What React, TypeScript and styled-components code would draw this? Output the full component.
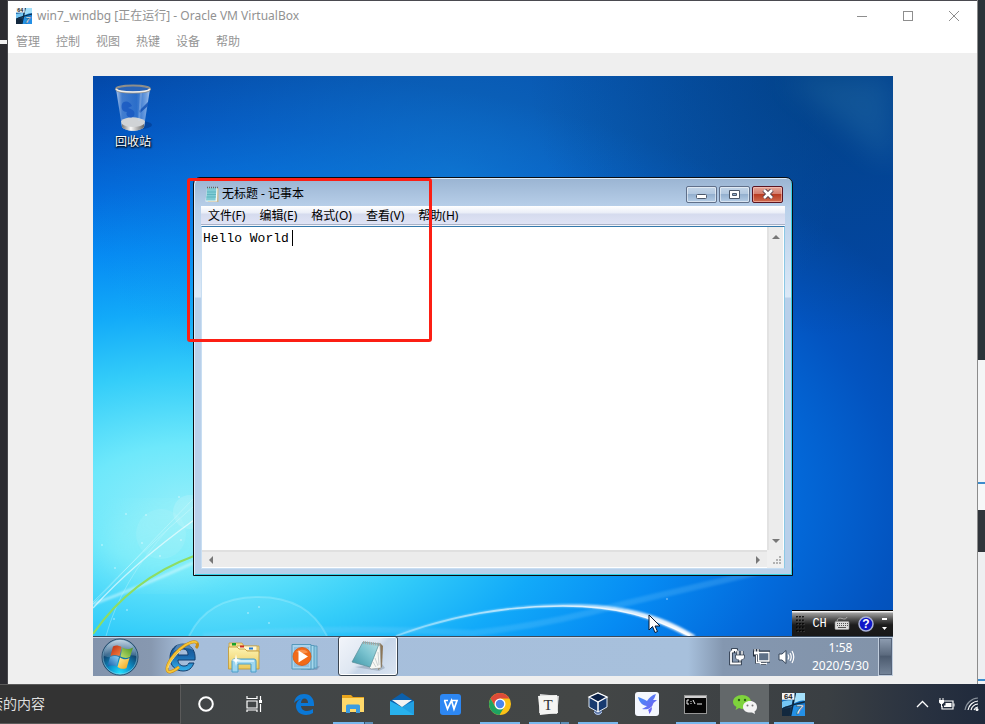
import React from "react";
import styled, { createGlobalStyle, css } from "styled-components";

const GlobalStyle = createGlobalStyle`
  *, *::before, *::after { box-sizing: border-box; }
  html, body, #root { margin: 0; height: 100%; }
  body { overflow: hidden; font: 12px/16px "Noto Sans", "Noto Sans CJK SC", sans-serif; }
  button, input, textarea { font: inherit; color: inherit; border: 0; padding: 0; margin: 0; background: none; outline: 0; }
  svg { display: block; flex: none; }
`;

/* ---------- host desktop ---------- */

const Host = styled.div`
  height: 100vh;
  display: grid;
  grid-template-columns: 8px 1fr 8px;
  grid-template-rows: 1fr 40px;
`;

const LeftEdge = styled.div`
  border-right: 1px solid #47474b;
  background: linear-gradient(#2c2c31 40px, #f0f0f0 40px 44px, #2b2b30 44px);
`;

const RightEdge = styled.div`
  border-left: 1px solid #8c8c8c;
  background: linear-gradient(
    #2b3238 360px, #f4f5f6 360px 482px, #3d8ccc 482px 484px, #f6f7f8 484px 510px,
    #30353b 510px 552px, #eeeff1 552px 679px, #3d8ccc 679px 681px, #f2f3f5 681px
  );
`;

const VmWindow = styled.main`
  display: flex;
  flex-direction: column;
  min-width: 0;
  border-top: 1px solid #4a4a50;
  background: #efefef;
`;

const VmTitleBar = styled.header`
  display: flex;
  align-items: center;
  height: 30px;
  padding-left: 8px;
  gap: 5px;
  background: #fff;
  color: #929292;
`;

const VmTitle = styled.h1`
  flex: 1;
  margin: 0;
  font-size: 12px;
  line-height: 16px;
  font-weight: 400;
`;

const ControlGroup = styled.div`
  display: flex;
`;

const VmControl = styled.button`
  display: grid;
  place-items: center;
  width: 46px;
  height: 30px;
`;

const VmMenu = styled.nav`
  display: flex;
  height: 22px;
  padding-left: 8px;
  gap: 16px;
  background: #fff;
  color: #959595;
`;

const MenuButton = styled.button`
  line-height: 20px;
  white-space: nowrap;
`;

const VmViewport = styled.div`
  flex: 1;
  display: flex;
  min-height: 0;
  padding: 23px 84px 8px 85px;
`;

/* ---------- guest desktop ---------- */

const Guest = styled.section`
  flex: 1;
  display: flex;
  flex-direction: column;
  min-width: 0;
`;

const GuestDesktop = styled.div`
  flex: 1;
  position: relative;
  min-height: 0;
  background:
    radial-gradient(ellipse 300px 260px at 92% 0, rgba(2, 62, 112, 0.55), transparent),
    radial-gradient(ellipse 380px 260px at 45% 18%, rgba(24, 140, 216, 0.5), transparent),
    radial-gradient(ellipse 820px 440px at 100px 430px,
      #92eefa 0%, #6ee8fb 14%, #34cdf9 30%, #12aaf9 44%, #068bf3 58%, #036bdc 72%, #0354c0 86%, #0347a6 100%);
`;

const Wallpaper = styled.svg`
  position: absolute;
  inset: 0;
  width: 100%;
  height: 100%;
`;

const DesktopIcon = styled.button`
  position: absolute;
  left: 10px;
  top: 8px;
  width: 60px;
  display: flex;
  flex-direction: column;
  align-items: center;
  gap: 2px;
  color: #fff;
  text-shadow: 1px 1px 2px #000, 0 1px 2px #000;
`;

const Notepad = styled.section`
  position: absolute;
  inset: 101px 100px 60px;
  display: flex;
  flex-direction: column;
  padding: 0 7px 6px;
  border: 1px solid #0a0d12;
  border-radius: 7px 7px 0 0;
  background: linear-gradient(#9ab4d2, #b9d0ea 30px, #dce9f7 119px, #b9d0ea 120px);
  box-shadow: inset 1px 1px #dcebf9, inset -1px -1px #35cfe4;
`;

const NotepadTitleBar = styled.header`
  display: flex;
  align-items: center;
  height: 28px;
  gap: 2px;
  padding: 4px 2px 0 3px;
  color: #000;
`;

const NotepadTitle = styled.h2`
  flex: 1;
  margin: 0;
  font-size: 12px;
  line-height: 16px;
  font-weight: 400;
`;

const CaptionButton = styled.button<{ $close?: boolean }>`
  display: grid;
  place-items: center;
  width: 31px;
  height: 17px;
  border: 1px solid ${(p) => (p.$close ? "#5a1422" : "#60708a")};
  border-radius: 2px;
  background: ${(p) =>
    p.$close
      ? "linear-gradient(#e4a69a, #d27a6a 48%, #b93c22 50%, #cf6b50)"
      : "linear-gradient(#c3d5e8, #b1c7df 48%, #94b0cf 50%, #b5cde6)"};
  box-shadow: inset 0 0 0 1px ${(p) => (p.$close ? "rgba(255,205,195,.55)" : "rgba(255,255,255,.5)")};
`;

const NotepadMenu = styled.nav`
  display: flex;
  height: 20px;
  gap: 14px;
  padding-left: 7px;
  color: #000;
  border-bottom: 1px solid #f4f6fb;
  background: linear-gradient(#fff, #e9edf7 7px, #d5dbee 8px, #dfe3f5 18px, #a9b2c8 18px);
`;

const Client = styled.div`
  flex: 1;
  min-height: 0;
  display: grid;
  grid-template-columns: 1fr 17px;
  grid-template-rows: 1fr 18px;
  border: 1px solid #c8def2;
  border-top: 1px solid #3478ac;
  border-right-color: #8cc8e4;
  background: #fff;
`;

const Editor = styled.div`
  position: relative;
`;

const TextArea = styled.textarea`
  display: block;
  width: 100%;
  height: 100%;
  padding: 3px 1px;
  resize: none;
  overflow: hidden;
  color: #000;
  font: 13px/18px "Liberation Mono", monospace;
`;

const Caret = styled.span`
  position: absolute;
  left: 90px;
  top: 3px;
  width: 1px;
  height: 16px;
  background: #000;
`;

const ScrollBar = styled.div<{ $vertical?: boolean }>`
  display: flex;
  justify-content: space-between;
  align-items: center;
  background: #ececec;
  ${(p) =>
    p.$vertical
      ? css`
          flex-direction: column;
          padding: 6px 0 5px;
          border-left: 2px solid #e2e2e2;
          border-right: 1px solid #fff;
        `
      : css`
          padding: 0 5px;
          border-top: 2px solid #e0e0e0;
          border-bottom: 1px solid #fff;
        `}
`;

const ScrollArrow = styled.button`
  display: grid;
  place-items: center;
  width: 8px;
  height: 8px;
`;

const ResizeGrip = styled.div`
  display: grid;
  place-items: end;
  padding: 2px;
  background: #f0f0f0;
`;

const RedFrame = styled.div`
  position: absolute;
  left: 94px;
  top: 102px;
  width: 245px;
  height: 164px;
  border: 3px solid #fc1f14;
  border-radius: 3px;
  pointer-events: none;
`;

const Pointer = styled.svg`
  position: absolute;
  left: 555px;
  top: 538px;
`;

const LanguageBar = styled.div`
  position: absolute;
  right: 0;
  bottom: 0;
  width: 101px;
  height: 26px;
  display: flex;
  align-items: center;
  justify-content: space-between;
  padding: 0 5px 0 4px;
  border-top: 1px solid #000;
  background: linear-gradient(#f2f2f2 1px, #a0a0a0 2px, #555 8px, #1c1c1c 14px, #181818);
  color: #fff;
  font: 12px/16px "Liberation Mono", monospace;
`;

const BarButton = styled.button`
  display: grid;
  place-items: center;
`;

const GuestTaskbar = styled.footer`
  display: flex;
  height: 40px;
  border-top: 1px solid #3b4a5c;
  box-shadow: inset 0 1px #c9d8ea;
  background: linear-gradient(90deg, #8293ac, #8798b0 58px, #a6bedb 92px, #a7c0dc calc(100% - 205px), #8497b0 calc(100% - 170px), #8293a9);
`;

const StartButton = styled.button`
  display: grid;
  place-items: center;
  width: 54px;
  margin-right: 4px;
`;

const GuestTask = styled.button<{ $active?: boolean }>`
  display: grid;
  place-items: center;
  width: 62px;
  ${(p) =>
    p.$active &&
    css`
      width: 60px;
      margin: -1px 1px 0;
      border: 1px solid #3a4552;
      border-radius: 3px;
      box-shadow: inset 0 0 0 1px #fff;
      background: linear-gradient(135deg, #f2f5fa, #dfe7f2 45%, #c6d5e8 55%, #dbe5f2);
    `}
`;

const GuestTray = styled.div`
  display: flex;
  align-items: center;
  margin-left: auto;
  color: #fff;
`;

const TrayIcons = styled.div`
  display: flex;
  align-items: center;
  gap: 8px;
  padding-right: 8px;
`;

const Clock = styled.time`
  width: 75px;
  text-align: center;
  line-height: 18px;
`;

const ShowDesktop = styled.button`
  align-self: stretch;
  width: 15px;
  border: 1px solid #c0cddd;
  outline: 1px solid #566479;
  outline-offset: -2px;
  background: linear-gradient(#8f9eb2, #5c6b7f 45%, #4c5b6f 50%, #75859a);
`;

/* ---------- host taskbar ---------- */

const HostTaskbar = styled.footer`
  grid-column: 1 / -1;
  display: flex;
  overflow: hidden;
  background: linear-gradient(90deg, #404446, #434646 60%, #3a3f43 84%, #283140 94%, #202a3c);
  color: #fff;
`;

const SearchBox = styled.input`
  width: 181px;
  border: 1px solid #5a5a5a;
  border-left: 0;
  background: #333;
  font-size: 14px;
  text-indent: -11px;
  &::placeholder { color: #dedede; opacity: 1; }
`;

const HostTask = styled.button<{ $open?: boolean; $group?: boolean; $active?: boolean }>`
  display: grid;
  place-items: center;
  width: 49px;
  background:
    ${(p) =>
      p.$group
        ? "linear-gradient(90deg, #78b8ee 31px, #30536f 31px 32px, #5c8fb8 32px) center bottom / 40px 2px no-repeat"
        : p.$open
          ? `linear-gradient(#78b8ee, #78b8ee) center bottom / ${p.$active ? "49px" : "40px"} 2px no-repeat`
          : "none"}
    ${(p) => (p.$active ? ", #63686a" : "")};
`;

const HostTray = styled.div`
  display: flex;
  align-items: center;
  gap: 9px;
  margin-left: auto;
  padding-right: 6px;
`;

/* ---------- drawings ---------- */

const VmIcon = ({ size }: { size: number }) => (
  <svg width={size} height={size} viewBox="0 0 24 24">
    <rect width="24" height="24" rx="1" fill="#1272c4" />
    <path d="M0 9C5 7 8 8 12 6L9 24H0Z" fill="#1c3e60" />
    <path d="M0 9C5 7 8 8 11 7L10 14C7 13 3 14 0 16Z" fill="#74c6f4" />
    <path d="M0 18C3 16 7 15 9 16L8 24H0Z" fill="#12283e" />
    <path d="M14 0H24V8C20 7 16 9 12 11Z" fill="#a4e0fb" />
    <path d="M12 13C16 11 20 11 24 12V24H9Z" fill="#2490e6" />
    <path d="M14 0L9 24M0 17C8 12 15 12 24 9" stroke="#0c2840" strokeWidth="1.5" fill="none" />
    <rect x="0" y="0" width="13" height="7" fill="#f4f4f4" />
    <text x="2" y="6.5" fontSize="8" fontWeight="700" fontFamily="Liberation Sans" fill="#222">64</text>
    <text x="14" y="22" fontSize="14" fontWeight="700" fontStyle="italic" fontFamily="Liberation Sans" fill="#fff" stroke="#20405c" strokeWidth=".5">7</text>
  </svg>
);

const RecycleBin = () => (
  <svg width="42" height="48" viewBox="0 0 42 48">
    <defs>
      <linearGradient id="bin" x1="0" x2="1">
        <stop offset="0" stopColor="#d6e6fb" stopOpacity=".8" />
        <stop offset=".18" stopColor="#6d9ade" stopOpacity=".6" />
        <stop offset=".6" stopColor="#4a84d8" stopOpacity=".55" />
        <stop offset=".9" stopColor="#9dc0ef" stopOpacity=".75" />
        <stop offset="1" stopColor="#d8e6fb" stopOpacity=".8" />
      </linearGradient>
      <linearGradient id="base" x1="0" x2="1">
        <stop offset="0" stopColor="#777" />
        <stop offset=".4" stopColor="#fafafa" />
        <stop offset="1" stopColor="#666" />
      </linearGradient>
    </defs>
    <ellipse cx="28" cy="41" rx="12" ry="4" fill="#002a70" opacity=".4" />
    <path d="M4 5L10 43C14 47 28 47 32 43L38 5Z" fill="url(#bin)" />
    <path d="M9 37C14 32 27 32 33 37L32 43C28 48 14 48 10 43Z" fill="#d0d3d6" />
    <path d="M10 40C14 44 28 44 32 40L32 43C28 48 14 48 10 43Z" fill="url(#base)" />
    <path d="M10 20C12 16 18 17 20 22L16 24C20 25 24 27 22 32C17 36 13 31 15 28C10 28 9 24 10 20Z" fill="#1858c0" opacity=".8" />
    <path d="M27 27L36 18V22L28 29Z" fill="#1452b4" opacity=".85" />
    <path d="M29 9L27 37" stroke="#cfe0f8" strokeWidth="2" opacity=".25" />
    <ellipse cx="21" cy="5" rx="17" ry="3.5" fill="#2a64b8" stroke="#8e8e8a" strokeWidth="2" />
    <path d="M4 5C7 9 35 9 38 5" stroke="#eee" strokeWidth="1.5" fill="none" />
  </svg>
);

const NotepadSmall = () => (
  <svg width="16" height="17" viewBox="0 0 16 17">
    <path d="M4 2H14.5V16H4Z" fill="#c9b98e" />
    <path d="M3 2H13.5L13 15.5H1.500Z" fill="#f4f8f6" />
    <path d="M3 2H12.5L11.5 14.5H2Z" fill="#7fcbd4" />
    <path d="M3 6H12M3 8.5H12M2.5 11H12" stroke="#55aeba" strokeWidth=".8" />
    <path d="M3 1.5H14" stroke="#666" strokeWidth="1.5" strokeDasharray="1 1" />
  </svg>
);

const NotepadLarge = () => (
  <svg width="34" height="32" viewBox="0 0 34 32">
    <defs>
      <linearGradient id="pad" x1="0" y1="1" x2="1" y2="0">
        <stop offset="0" stopColor="#3e94a6" />
        <stop offset=".55" stopColor="#7cc4d0" />
        <stop offset="1" stopColor="#b8dfe4" />
      </linearGradient>
    </defs>
    <path d="M4 27L28 31L34 28L31 24Z" fill="#8696a8" opacity=".5" />
    <path d="M29 3L32 6L31 27L27 30Z" fill="#8c7658" />
    <path d="M27 3L29 4L30 28L20 29L17 26Z" fill="#f8f8f4" stroke="#91989c" strokeWidth=".6" />
    <path d="M12 2L28 4L19 27L1 22Z" fill="url(#pad)" stroke="#568c96" strokeWidth=".7" />
    <path d="M12 2.5L29 4.5" stroke="#a4a4a0" strokeWidth="3" strokeDasharray="1 1" />
    <path d="M22 22L25 27M24 18L27 26M27 12L28 25" stroke="#b8bec2" strokeWidth=".7" />
  </svg>
);

const StartOrb = () => (
  <svg width="38" height="38" viewBox="0 0 38 38">
    <defs>
      <radialGradient id="orb" cx=".5" cy=".95" r=".9">
        <stop offset="0" stopColor="#22e0ff" />
        <stop offset=".35" stopColor="#0b93cc" />
        <stop offset=".7" stopColor="#12456f" />
        <stop offset="1" stopColor="#6385a4" />
      </radialGradient>
      <linearGradient id="orbShine" x1="0" y1="0" x2="0" y2="1">
        <stop offset="0" stopColor="#dceaf5" stopOpacity=".75" />
        <stop offset="1" stopColor="#9cbcd5" stopOpacity=".25" />
      </linearGradient>
      <linearGradient id="flagR" x1="0" x2="1" y2="1"><stop stopColor="#b92c14" /><stop offset="1" stopColor="#f98440" /></linearGradient>
      <linearGradient id="flagG" x1="1" x2="0" y2="1"><stop stopColor="#4a9420" /><stop offset="1" stopColor="#c0e070" /></linearGradient>
      <linearGradient id="flagB" x1="0" x2="1" y1="1" y2="0"><stop stopColor="#145ca8" /><stop offset="1" stopColor="#8cd2f8" /></linearGradient>
      <linearGradient id="flagY" x1="1" x2="0" y1="1" y2="0"><stop stopColor="#f0a010" /><stop offset="1" stopColor="#fff0a0" /></linearGradient>
    </defs>
    <circle cx="19" cy="19" r="18" fill="url(#orb)" stroke="#264c6c" strokeWidth="1" />
    <circle cx="19" cy="19" r="17" fill="none" stroke="#a6d4e8" strokeWidth=".8" opacity=".7" />
    <path d="M3 18A16 16 0 0 1 35 18C27 15 12 22 3 18Z" fill="url(#orbShine)" />
    <path d="M12 8.500C15 7 17.500 7.500 20.500 9L18.500 18C15 16.500 12.500 16.500 9.500 18Z" fill="url(#flagR)" />
    <path d="M21.500 9.500C25 11.500 28 11.500 32 9.500L29 19C25.500 20.500 22.500 20 19.500 18.500Z" fill="url(#flagG)" />
    <path d="M9 19C12 17.500 14.500 17.500 18 19L15.500 28.500C12.500 27 10 27 6.500 28.500Z" fill="url(#flagB)" />
    <path d="M19 19.500C22 21.500 25 22 28.500 20L25.500 30C23 31.500 19.500 31 16.500 29Z" fill="url(#flagY)" />
  </svg>
);

const InternetExplorer = () => (
  <svg width="34" height="34" viewBox="0 0 34 34">
    <defs>
      <linearGradient id="ie" x1="0" y1="0" x2="0" y2="1">
        <stop offset="0" stopColor="#16508c" />
        <stop offset=".45" stopColor="#1b68ac" />
        <stop offset="1" stopColor="#35b4ee" />
      </linearGradient>
    </defs>
    <path d="M18 4C26 4 31 11 30 20H13C13 24 16 26 19 26C22 26 23 25 24 23H29C27 28 24 31 18 31C10 31 5 25 5 18C5 10 10 4 18 4ZM13 15H23C23 11 21 9 18 9C15 9 13 11 13 15Z" fill="url(#ie)" stroke="#123d6c" strokeWidth="1" fillRule="evenodd" />
    <path d="M12 5C17 2 26 4 28 10C23 7 14 7 8 12Z" fill="#bcdcf5" opacity=".35" />
    <path d="M14 27C8 32 2 34 2 29C2 24 8 15 15 9C22 3 30 0 32 3C33 5 32 7 31 8" fill="none" stroke="#c98c14" strokeWidth="3" />
    <path d="M14 27C8 32 2 34 2 29C2 24 8 15 15 9C22 3 30 0 32 3" fill="none" stroke="#f6c435" strokeWidth="2" />
    <path d="M3 28C4 23 10 16 15 11" fill="none" stroke="#ffe891" strokeWidth=".9" />
  </svg>
);

const WinExplorer = () => (
  <svg width="34" height="32" viewBox="0 0 34 32">
    <defs>
      <linearGradient id="fold" x1="0" y1="0" x2="0" y2="1">
        <stop offset="0" stopColor="#fdf4b4" />
        <stop offset="1" stopColor="#ecc95a" />
      </linearGradient>
    </defs>
    <path d="M2 2H15L17 5H32V12H2Z" fill="#f3dc8c" stroke="#c5a144" strokeWidth=".8" />
    <rect x="5" y="2" width="4" height="2.5" fill="#18a228" />
    <path d="M10 5H30V10H10Z" fill="#fff8d6" stroke="#c5a144" strokeWidth=".7" />
    <rect x="13" y="4.5" width="4" height="2" fill="#cf2e20" />
    <rect x="22" y="6.5" width="4" height="2" fill="#2079d4" />
    <path d="M1.5 6H10L12 8H18L20 10H32V28H1.500Z" fill="url(#fold)" stroke="#c39c3c" strokeWidth=".9" />
    <path d="M5 31V20Q5 18 7 18H27Q29 18 29 20V31H24V23H11V31Z" fill="#9ed7ef" stroke="#4a9fca" strokeWidth="1" />
    <path d="M7 20H27" stroke="#dff5fd" strokeWidth="1.5" />
    <path d="M9 13L10 18L14 19L10 20L9 25L8 20L4 19L8 18Z" fill="#fff" />
  </svg>
);

const MediaPlayer = () => (
  <svg width="30" height="28" viewBox="0 0 30 28">
    <path d="M19 24L29 23L26 27H16Z" fill="#6f87a5" opacity=".5" />
    <path d="M13 3H26V25H13Z" fill="#8ec6e0" stroke="#4d93b6" strokeWidth=".8" />
    <path d="M10 2.5H23V26H10Z" fill="#a5d8ec" stroke="#4d93b6" strokeWidth=".8" />
    <path d="M1 1.5H20V26H1Z" fill="#a9d3ec" stroke="#4d93b6" strokeWidth=".9" />
    <path d="M3 4H18V24H3Z" fill="#8fbfe0" />
    <circle cx="11" cy="13.5" r="9" fill="#f26a18" stroke="#d9560e" strokeWidth=".8" />
    <path d="M5 9A9 9 0 0 1 17 9C13 12 8 9 5 9Z" fill="#ffad70" opacity=".6" />
    <path d="M7.5 7.5L17 13.5L7.5 19.500Z" fill="#fff" />
  </svg>
);

const PowerPlug = () => (
  <svg width="16" height="18" viewBox="0 0 16 18">
    <path d="M2 3.5H4V2H7V3.5H9M2 3.5V15.5H11V13" stroke="#253040" strokeWidth="3.5" fill="none" />
    <path d="M2 3.5H4V2H7V3.5H9M2 3.5V15.5H11V13" stroke="#fff" strokeWidth="1.8" fill="none" />
    <path d="M9 3V7M13 3V7" stroke="#253040" strokeWidth="3" />
    <path d="M9 3V7M13 3V7" stroke="#fff" strokeWidth="1.5" />
    <path d="M6.5 7H15.5V9C15.5 11 13.5 12 12 12V14H10V12C8 12 6.5 11 6.5 9Z" fill="#fff" stroke="#253040" strokeWidth=".7" />
  </svg>
);

const NetworkIcon = () => (
  <svg width="17" height="17" viewBox="0 0 17 17">
    <path d="M5 4H16V13H5ZM8 15.5H13M2 1V4M5 1V4M1 4H6V7H1ZM3.5 7V14H6" fill="none" stroke="#253040" strokeWidth="3" />
    <path d="M5.5 4.5H16V13H5.500Z" fill="#5f7187" stroke="#fff" strokeWidth="1.3" />
    <path d="M7 15.5H14M2 1V4M5 1V4M3.5 7V14.5H8" fill="none" stroke="#fff" strokeWidth="1.3" />
    <path d="M1 3.5H6V6.5H1Z" fill="#fff" />
  </svg>
);

const SpeakerIcon = () => (
  <svg width="17" height="16" viewBox="0 0 17 16">
    <path d="M1 5H4L8 1.5V14.5L4 11H1Z" fill="#fff" stroke="#36465a" strokeWidth="1" />
    <path d="M10 5.5Q11.5 8 10 10.5M12 4Q14.5 8 12 12M14 2Q17.5 8 14 14" fill="none" stroke="#fff" strokeWidth="1.2" />
  </svg>
);

const Keyboard = () => (
  <svg width="16" height="15" viewBox="0 0 16 15">
    <path d="M3 5Q4 1 8 2.5Q12 4 13 1" fill="none" stroke="#a8a8a8" strokeWidth="1" />
    <rect x="1" y="5.5" width="14" height="8" rx="1" fill="#ddd" stroke="#999" strokeWidth=".6" />
    <path d="M3 7.5H14M3 9.5H14" stroke="#555" strokeDasharray="1 1" />
    <path d="M4 11.5H12" stroke="#555" />
  </svg>
);

const HelpBadge = () => (
  <svg width="16" height="16" viewBox="0 0 16 16">
    <circle cx="8" cy="8" r="7" fill="#1018c8" stroke="#a9b2d8" strokeWidth="1.5" />
    <text x="8" y="12" fontSize="12" fontWeight="700" textAnchor="middle" fontFamily="Liberation Sans" fill="#fff">?</text>
  </svg>
);

const Arrow = ({ rotate }: { rotate: number }) => (
  <svg width="8" height="8" viewBox="0 0 8 8">
    <path d="M0 6L4 2L8 6Z" fill="#777" transform={`rotate(${rotate} 4 4)`} />
  </svg>
);

const EdgeIcon = () => (
  <svg width="22" height="22" viewBox="0 0 22 22">
    <path d="M1 10C2 4 6 1 11 1C18 1 21 6 21 11V13H8C8 16 11 18 14 18C16 18 18 17 20 16V20C18 21 15.5 22 13 22C7 22 3 18 3 13C3 10 5 7 8 6C5 6.5 3 8 1 10ZM8 10H15C15 7 13.5 5.5 11.5 5.500C9.5 5.5 8 7.5 8 10Z" fill="#0a78d7" fillRule="evenodd" />
  </svg>
);

const FolderIcon = () => (
  <svg width="22" height="20" viewBox="0 0 22 20">
    <path d="M0 1H9L11 3H22V18H0Z" fill="#e9a41b" />
    <path d="M0 4H22V18H0Z" fill="#ffd96a" />
    <path d="M4 19V12Q4 10.5 5.5 10.5H16.5Q18 10.5 18 12V19H14V15H8V19Z" fill="#3b9ce0" />
  </svg>
);

const MailIcon = () => (
  <svg width="24" height="22" viewBox="0 0 24 22">
    <path d="M0 8L12 0L24 8V12H0Z" fill="#0b60ac" />
    <path d="M0 8L12 14L24 8V22H0Z" fill="#28b2ee" />
    <path d="M24 8V22L10 13Z" fill="#1c94dc" opacity=".6" />
    <path d="M2 7H22L12 14Z" fill="#f3f3f3" />
  </svg>
);

const WpsIcon = () => (
  <svg width="21" height="21" viewBox="0 0 21 21">
    <rect width="21" height="21" rx="3" fill="#2d87f3" />
    <path d="M4 6.5H8M4.5 6.5L7.5 15L11.5 6.5L14 15L17 6.5H11" fill="none" stroke="#fff" strokeWidth="1.7" />
  </svg>
);

const ChromeIcon = () => (
  <svg width="22" height="22" viewBox="0 0 22 22">
    <circle cx="11" cy="11" r="11" fill="#fbc116" />
    <path d="M1.5 5.500A11 11 0 0 1 20.5 5.5H11L6.3 13.7Z" fill="#dd4b39" />
    <path d="M1.5 5.5L6.3 13.700C8 16 11 17 15 14.5L10.5 22A11 11 0 0 1 1.5 5.500Z" fill="#1ea362" />
    <circle cx="11" cy="11" r="5.5" fill="#fff" />
    <circle cx="11" cy="11" r="4.2" fill="#4a86ee" />
  </svg>
);

const TyporaIcon = () => (
  <svg width="23" height="23" viewBox="0 0 23 23">
    <path d="M3 1L22 3L20 21L2 20Z" fill="#d4d4d4" />
    <path d="M1 3L20 2L21 20L3 22Z" fill="#f5f5f3" />
    <text x="11" y="17" fontSize="15" textAnchor="middle" fontFamily="Liberation Serif" fill="#333">T</text>
  </svg>
);

const VirtualBoxIcon = () => (
  <svg width="22" height="24" viewBox="0 0 22 24">
    <circle cx="11" cy="19" r="4" fill="#5872a4" />
    <path d="M2 5L11 1L20 5V15L11 20L2 15Z" fill="#173a70" stroke="#dce6f2" strokeWidth="1" />
    <path d="M2 5L11 10L20 5L11 1Z" fill="#0c2249" stroke="#fff" strokeWidth="1.3" />
    <path d="M11 10V20" stroke="#fff" strokeWidth="1.5" />
    <path d="M7 20Q11 25 15 20" stroke="#b7c8e2" fill="none" />
  </svg>
);

const XunleiIcon = () => (
  <svg width="24" height="24" viewBox="0 0 24 24">
    <defs>
      <linearGradient id="bird" x1="0" x2="1" y2="1"><stop stopColor="#3f92f8" /><stop offset="1" stopColor="#7c58f2" /></linearGradient>
    </defs>
    <rect width="24" height="24" rx="3" fill="#f4f7fe" />
    <path d="M3 5C6 6 9 7 12 9C14 6 17 3 21 2C20 4 20 6 18 8H22C20 10 19 10 18 12C17 16 13 18 7 17C9 16 11 15 12 14C8 14 4 10 3 5ZM13 18L17 15C17 18 16 20 14 22C14 20 14 19 13 18Z" fill="url(#bird)" />
  </svg>
);

const TerminalIcon = () => (
  <svg width="23" height="19" viewBox="0 0 23 19">
    <rect x=".5" y=".5" width="22" height="18" fill="#050505" stroke="#979797" />
    <path d="M1 2H22" stroke="#d0d0d0" strokeWidth="2" />
    <path d="M5 5H3V9H5M7 6V7M7 8V9M9 5L11 9M13 9H18" fill="none" stroke="#eee" strokeWidth="1" />
  </svg>
);

const WeChatIcon = () => (
  <svg width="24" height="20" viewBox="0 0 24 20">
    <path d="M9 1C14 1 18 4 18 8C18 12 14 15 9 15L6 14L2.5 16L3.5 13C1.5 12 0 10 0 8C0 4 4 1 9 1Z" fill="#7ed33c" />
    <circle cx="6" cy="6" r="1.2" fill="#2c5e18" /><circle cx="12" cy="6" r="1.2" fill="#2c5e18" />
    <path d="M17 7C21 7 24 9.5 24 13C24 15 23 16.5 21.5 17.5L22 20L19 18.500C14 19 10 17 10 13C10 9.5 13 7 17 7Z" fill="#f4f4f4" />
    <circle cx="14.5" cy="11.5" r="1" fill="#777" /><circle cx="19.5" cy="11.5" r="1" fill="#777" />
  </svg>
);

const CortanaIcon = () => (
  <svg width="16" height="16" viewBox="0 0 16 16"><circle cx="8" cy="8" r="6.8" fill="none" stroke="#fff" strokeWidth="2" /></svg>
);

const TaskViewIcon = () => (
  <svg width="17" height="16" viewBox="0 0 17 16">
    <path d="M1 0V2.5H11V0M1 5H11V12H1ZM1 16V14H11V16M14.5 0V4M14.5 8V16" fill="none" stroke="#fff" strokeWidth="1.2" />
    <rect x="13" y="4" width="3" height="3" fill="#fff" />
  </svg>
);

type Task = { name: string; icon: React.ReactNode; open?: boolean; group?: boolean; active?: boolean };

const hostTasks: Task[] = [
  { name: "Cortana", icon: <CortanaIcon /> },
  { name: "任务视图", icon: <TaskViewIcon /> },
  { name: "Edge", icon: <EdgeIcon /> },
  { name: "文件资源管理器", icon: <FolderIcon />, group: true },
  { name: "邮件", icon: <MailIcon /> },
  { name: "WPS", icon: <WpsIcon /> },
  { name: "Chrome", icon: <ChromeIcon />, open: true },
  { name: "Typora", icon: <TyporaIcon />, group: true },
  { name: "VirtualBox", icon: <VirtualBoxIcon />, open: true },
  { name: "迅雷", icon: <XunleiIcon /> },
  { name: "命令提示符", icon: <TerminalIcon />, open: true },
  { name: "微信", icon: <WeChatIcon />, open: true, active: true },
  { name: "win7", icon: <VmIcon size={23} />, open: true },
];

const stars = [
  [33, 438], [86, 421], [53, 439], [49, 467], [88, 464], [22, 492], [9, 469], [34, 534],
  [21, 543], [67, 480], [155, 537], [166, 531], [176, 547], [574, 443], [661, 435], [574, 523],
];

export default function App() {
  return (
    <>
      <GlobalStyle />
      <Host>
        <LeftEdge />
        <VmWindow>
          <VmTitleBar>
            <VmIcon size={16} />
            <VmTitle>win7_windbg [正在运行] - Oracle VM VirtualBox</VmTitle>
            <ControlGroup>
              <VmControl aria-label="最小化">
                <svg width="10" height="10" viewBox="0 0 10 10"><path d="M0 5.5H10" stroke="#8e8e8e" /></svg>
              </VmControl>
              <VmControl aria-label="最大化">
                <svg width="10" height="10" viewBox="0 0 10 10"><rect x=".5" y=".5" width="9" height="9" fill="none" stroke="#8e8e8e" /></svg>
              </VmControl>
              <VmControl aria-label="关闭">
                <svg width="10" height="10" viewBox="0 0 10 10"><path d="M0 0L10 10M10 0L0 10" stroke="#8e8e8e" /></svg>
              </VmControl>
            </ControlGroup>
          </VmTitleBar>
          <VmMenu aria-label="VirtualBox">
            {["管理", "控制", "视图", "热键", "设备", "帮助"].map((label) => (
              <MenuButton key={label}>{label}</MenuButton>
            ))}
          </VmMenu>
          <VmViewport>
            <Guest>
              <GuestDesktop>
                <Wallpaper viewBox="0 0 800 560" preserveAspectRatio="none" aria-hidden="true">
                  <defs>
                    <filter id="soft"><feGaussianBlur stdDeviation="1" /></filter>
                    <filter id="haze"><feGaussianBlur stdDeviation="14" /></filter>
                    <linearGradient id="arc" x1="0" x2="1">
                      <stop offset="0" stopColor="#fff" stopOpacity=".3" />
                      <stop offset=".65" stopColor="#fff" stopOpacity=".75" />
                      <stop offset="1" stopColor="#fff" />
                    </linearGradient>
                  </defs>
                  <ellipse cx="70" cy="470" rx="60" ry="40" fill="#b6fbf4" opacity=".25" filter="url(#haze)" />
                  <path d="M690 0L800 0V90Z" fill="#4b9cc4" opacity=".2" filter="url(#haze)" />
                  <circle cx="97" cy="436" r="17" fill="#fff" opacity=".14" />
                  <circle cx="68" cy="458" r="25" fill="#fff" opacity=".08" />
                  <path d="M96 560Q115 521 165 521Q215 521 234 560Z" fill="#b5f3ff" opacity=".12" />
                  <path d="M96 560Q115 521 165 521Q215 521 234 560" fill="none" stroke="#d5faff" strokeWidth="2" opacity=".25" />
                  <path d="M0 528Q45 512 100 487" fill="none" stroke="#e6fdff" strokeWidth="2.5" opacity=".55" filter="url(#soft)" />
                  <path d="M0 532Q40 488 101 444" fill="none" stroke="#fff" strokeWidth="1.5" opacity=".6" />
                  <path d="M0 528Q45 480 101 422M0 526Q50 474 101 430" fill="none" stroke="#dffcff" strokeWidth="1" opacity=".35" />
                  <path d="M13 560Q28 505 76 452" fill="none" stroke="#bdf5ff" opacity=".4" />
                  <path d="M0 558Q38 503 101 480" fill="none" stroke="#8edd61" strokeWidth="2" />
                  <path d="M110 560Q240 549 380 557Q450 550 530 528Q650 500 700 488" fill="none" stroke="#8bd8ff" strokeWidth="6" opacity=".2" filter="url(#soft)" />
                  <path d="M303 560C370 535 430 530 470 530C525 530 558 541 594 560L602 560C562 535 520 528 470 529C420 530 360 538 303 560Z" fill="url(#arc)" stroke="url(#arc)" strokeWidth="1" filter="url(#soft)" />
                  <path d="M303 560C370 535 430 530 470 530C525 530 560 541 597 560" fill="none" stroke="url(#arc)" strokeWidth="1.5" />
                  {stars.map(([x, y], i) => (
                    <circle key={i} cx={x} cy={y} r="1" fill="#fff" opacity=".4" />
                  ))}
                </Wallpaper>
                <DesktopIcon>
                  <RecycleBin />
                  <span>回收站</span>
                </DesktopIcon>
                <Notepad>
                  <NotepadTitleBar>
                    <NotepadSmall />
                    <NotepadTitle>无标题 - 记事本</NotepadTitle>
                    <CaptionButton aria-label="最小化">
                      <svg width="11" height="9" viewBox="0 0 11 9"><rect x=".5" y="4.5" width="10" height="4" rx="1" fill="#fff" stroke="#4c586a" /></svg>
                    </CaptionButton>
                    <CaptionButton aria-label="最大化">
                      <svg width="11" height="9" viewBox="0 0 11 9"><path d="M.5 .5H10.5V8.5H.5ZM3.5 3.5V5.5H7.5V3.5Z" fill="#fff" fillRule="evenodd" stroke="#4c586a" /></svg>
                    </CaptionButton>
                    <CaptionButton $close aria-label="关闭">
                      <svg width="12" height="10" viewBox="0 0 12 10">
                        <path d="M2 1L10 9M10 1L2 9" stroke="#56404a" strokeWidth="4.5" />
                        <path d="M2 1L10 9M10 1L2 9" stroke="#fff" strokeWidth="2.5" />
                      </svg>
                    </CaptionButton>
                  </NotepadTitleBar>
                  <NotepadMenu aria-label="记事本">
                    {["文件(F)", "编辑(E)", "格式(O)", "查看(V)", "帮助(H)"].map((label) => (
                      <MenuButton key={label}>{label}</MenuButton>
                    ))}
                  </NotepadMenu>
                  <Client>
                    <Editor>
                      <TextArea aria-label="文本" defaultValue="Hello World" spellCheck={false} />
                      <Caret />
                    </Editor>
                    <ScrollBar $vertical>
                      <ScrollArrow aria-label="向上滚动"><Arrow rotate={0} /></ScrollArrow>
                      <ScrollArrow aria-label="向下滚动"><Arrow rotate={180} /></ScrollArrow>
                    </ScrollBar>
                    <ScrollBar>
                      <ScrollArrow aria-label="向左滚动"><Arrow rotate={-90} /></ScrollArrow>
                      <ScrollArrow aria-label="向右滚动"><Arrow rotate={90} /></ScrollArrow>
                    </ScrollBar>
                    <ResizeGrip>
                      <svg width="10" height="10" viewBox="0 0 10 10">
                        <path d="M7 1H9M4 4H6M7 4H9M1 7H3M4 7H6M7 7H9" stroke="#b2b2b2" strokeWidth="2" />
                      </svg>
                    </ResizeGrip>
                  </Client>
                </Notepad>
                <RedFrame />
                <Pointer width="14" height="20" viewBox="0 0 14 20">
                  <path d="M1 1V16L4.5 12.5L7 18.5L9.5 17.5L7 12H12Z" fill="#fff" stroke="#0b1830" />
                </Pointer>
                <LanguageBar>
                  <svg width="9" height="18" viewBox="0 0 9 18">
                    <path d="M1 1V18M4 1V18M7 1V18" stroke="#000" strokeWidth="1.5" strokeDasharray="1.5 2" />
                    <path d="M2 2V18M5 2V18M8 2V18" stroke="#777" strokeWidth=".6" strokeDasharray="1 2.5" />
                  </svg>
                  <BarButton>CH</BarButton>
                  <BarButton aria-label="键盘"><Keyboard /></BarButton>
                  <BarButton aria-label="帮助"><HelpBadge /></BarButton>
                  <BarButton aria-label="选项">
                    <svg width="7" height="14" viewBox="0 0 7 14"><path d="M1 1H6V3H1ZM1 10H6L3.5 13Z" fill="#fff" /></svg>
                  </BarButton>
                </LanguageBar>
              </GuestDesktop>
              <GuestTaskbar>
                <StartButton aria-label="开始"><StartOrb /></StartButton>
                <GuestTask aria-label="Internet Explorer"><InternetExplorer /></GuestTask>
                <GuestTask aria-label="资源管理器"><WinExplorer /></GuestTask>
                <GuestTask aria-label="媒体播放器"><MediaPlayer /></GuestTask>
                <GuestTask $active aria-label="记事本"><NotepadLarge /></GuestTask>
                <GuestTray>
                  <TrayIcons>
                    <PowerPlug />
                    <NetworkIcon />
                    <SpeakerIcon />
                  </TrayIcons>
                  <Clock>1:58<br />2020/5/30</Clock>
                  <ShowDesktop aria-label="显示桌面" />
                </GuestTray>
              </GuestTaskbar>
            </Guest>
          </VmViewport>
        </VmWindow>
        <RightEdge />
        <HostTaskbar>
          <SearchBox aria-label="搜索" placeholder="索的内容" />
          {hostTasks.map((t) => (
            <HostTask key={t.name} aria-label={t.name} $open={t.open} $group={t.group} $active={t.active}>
              {t.icon}
            </HostTask>
          ))}
          <HostTray>
            <svg width="13" height="8" viewBox="0 0 13 8"><path d="M1 7L6.5 1.5L12 7" fill="none" stroke="#fff" strokeWidth="1.3" /></svg>
            <svg width="17" height="14" viewBox="0 0 17 14">
              <path d="M6 4H15V12H4V9" fill="none" stroke="#fff" strokeWidth="1.2" />
              <path d="M7.5 6H13.5V10H6V8.5H7.500ZM15.5 6.5H16.5V9.5H15.500ZM1 3H6V5.5L4.5 7H2.5L1 5.500Z" fill="#fff" />
              <path d="M2 1V3M5 1V3M3.5 7V10" stroke="#fff" />
            </svg>
            <svg width="15" height="14" viewBox="0 0 15 14">
              <path d="M1 13A14 14 0 0 1 14 1" fill="none" stroke="#8a929c" strokeWidth="1.2" />
              <path d="M4 13A11 11 0 0 1 14 4M7 13A8 8 0 0 1 14 7M10 13A5 5 0 0 1 14 10" fill="none" stroke="#fff" strokeWidth="1.2" />
              <circle cx="13" cy="12.5" r="1.5" fill="#fff" />
            </svg>
          </HostTray>
        </HostTaskbar>
      </Host>
    </>
  );
}
